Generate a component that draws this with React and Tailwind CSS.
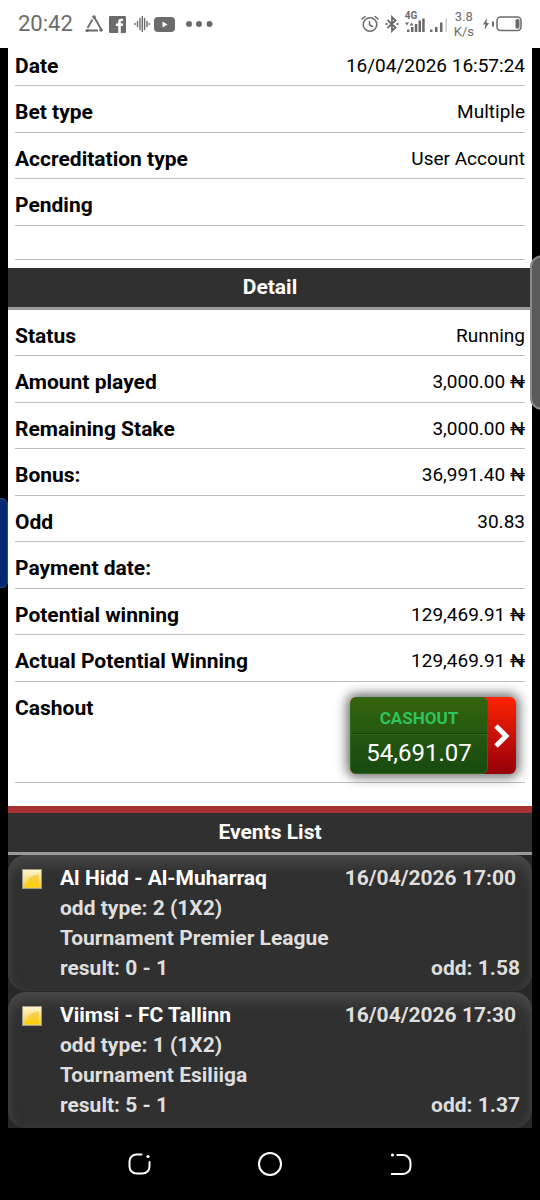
const summary = [
    { label: 'Date', value: '16/04/2026 16:57:24' },
    { label: 'Bet type', value: 'Multiple' },
    { label: 'Accreditation type', value: 'User Account' },
    { label: 'Pending', value: '' },
];

const details = [
    { label: 'Status', value: 'Running' },
    { label: 'Amount played', value: '3,000.00 ₦' },
    { label: 'Remaining Stake', value: '3,000.00 ₦' },
    { label: 'Bonus:', value: '36,991.40 ₦' },
    { label: 'Odd', value: '30.83' },
    { label: 'Payment date:', value: '' },
    { label: 'Potential winning', value: '129,469.91 ₦' },
    { label: 'Actual Potential Winning', value: '129,469.91 ₦' },
];

const events = [
    {
        teams: 'Al Hidd - Al-Muharraq',
        time: '16/04/2026 17:00',
        type: '2 (1X2)',
        tournament: 'Premier League',
        result: '0 - 1',
        odd: '1.58',
    },
    {
        teams: 'Viimsi - FC Tallinn',
        time: '16/04/2026 17:30',
        type: '1 (1X2)',
        tournament: 'Esiliiga',
        result: '5 - 1',
        odd: '1.37',
    },
];

function StatusBar() {
    return (
        <header className="flex h-12 shrink-0 items-center justify-between bg-white px-[18px] text-[#6b6b6b]">
            <div className="flex items-center">
                <span className="text-[22px] leading-6">20:42</span>
                {/* Triangle app */}
                <svg className="ml-3 h-[18px] w-[18px]" viewBox="0 0 18 18" fill="none" stroke="currentColor" strokeWidth="1.8">
                    <path d="M9.5 2.5L16 14M2 15.5h11M2.5 13L7.5 4.5" />
                    <g fill="currentColor" stroke="none">
                        <circle cx="9" cy="2" r="1.8" />
                        <circle cx="16" cy="15" r="1.8" />
                        <circle cx="2" cy="15.5" r="1.6" />
                    </g>
                </svg>
                <svg className="ml-1.5 h-[17px] w-[17px]" viewBox="0 0 17 17">
                    <rect width="17" height="17" rx="1" fill="currentColor" />
                    <path d="M14 2.7h-1.8c-1.9 0-3 1.1-3 3v1.8H6.8V10h2.4v7h2.6v-7h2l.4-2.5h-2.4V6.2c0-.7.3-1.1 1.1-1.1H14z" fill="white" />
                </svg>
                {/* Voice wave */}
                <svg className="ml-2 h-[18px] w-4" viewBox="0 0 16 18" stroke="currentColor" strokeWidth="1.4" strokeLinecap="round">
                    <path d="M1 8.5v1M3.5 6.5v5M6 3.5v11M8.3 1.5v15M10.6 3.5v11M13 6.5v5M15.2 8.5v1" />
                </svg>
                <svg className="ml-1 h-[15px] w-[21px]" viewBox="0 0 21 15">
                    <rect width="21" height="15" rx="4" fill="currentColor" />
                    <path d="M8.5 4.5v6l5-3z" fill="white" />
                </svg>
                <svg className="ml-2.5 h-2 w-7" viewBox="0 0 28 8" fill="currentColor">
                    <circle cx="4" cy="4" r="3" />
                    <circle cx="14" cy="4" r="3" />
                    <circle cx="24.5" cy="4" r="3" />
                </svg>
            </div>

            <div className="flex items-center">
                {/* Alarm */}
                <svg className="h-[18px] w-[18px]" viewBox="0 0 18 18" fill="none" stroke="currentColor" strokeWidth="1.5" strokeLinecap="round">
                    <circle cx="9" cy="9.5" r="6.8" />
                    <path d="M1 4l3-2.5M17 4l-3-2.5M8.5 6.5v3.5l3 1.5" />
                </svg>
                {/* Bluetooth */}
                <svg className="ml-1.5 h-[18px] w-3.5" viewBox="0 0 14 18" fill="none" stroke="currentColor" strokeWidth="1.8">
                    <path d="M2.5 5l8 7.5L7 16V2l3.5 3.5-8 7.5" />
                    <path d="M.5 9h2M11.5 9h2" />
                </svg>
                {/* 4G signal */}
                <span className="relative ml-1.5 flex">
                    <svg className="h-5 w-5" viewBox="0 0 20 20" fill="currentColor">
                        <path d="M2 15.5h2.5V18H2zM6 13h2.5v5H6zM9.8 10h2.5v8H9.8zM13.5 6.5H16V18h-2.5zM17.2 4.5h2.5V18h-2.5z" />
                        <path d="M0 8.5h4L2 11.5zM4.5 11.5h4l-2-3z" />
                    </svg>
                    <span className="absolute -top-1 left-0 text-[10px] leading-3 font-bold">4G</span>
                </span>
                <svg className="ml-1 h-5 w-[19px]" viewBox="0 0 19 20" fill="currentColor">
                    <path d="M1 15.5h2.5V18H1zM6 13h2.5v5H6zM11 8.5h2.5V18H11z" />
                    <path d="M16.5 4.5H18V18h-1.5z" opacity="0.35" />
                </svg>
                <span className="ml-1.5 flex flex-col items-center text-[13px] leading-[15px]">
                    <span>3.8</span>
                    <span>K/s</span>
                </span>
                {/* Charging battery */}
                <svg className="ml-2 h-[18px] w-10" viewBox="0 0 40 18" fill="none" stroke="currentColor" strokeWidth="1.5">
                    <path d="M5 3L1 9.5h2.5L2.5 15 7 8H4.5z" fill="currentColor" stroke="none" />
                    <path d="M11 6.5v5" strokeWidth="2" />
                    <rect x="15" y="2" width="24" height="13.5" rx="3.5" />
                    <rect x="33.5" y="4" width="4" height="9.5" rx="1.5" fill="currentColor" stroke="none" />
                </svg>
            </div>
        </header>
    );
}

function InfoRow({ label, value }) {
    return (
        <div className="flex justify-between border-b border-[#bdbdbd] pt-[15px] text-black odd:pb-2 even:pb-[9px]">
            <dt className="text-[21px] leading-[22px] font-bold">{label}</dt>
            <dd className="text-[19px] leading-[22px]">{value}</dd>
        </div>
    );
}

function SectionTitle({ children }) {
    return (
        <h2 className="border-b-[3px] border-[#9a9a9a] bg-[#303030] py-2 text-center text-[21px] leading-[23px] font-bold text-white">
            {children}
        </h2>
    );
}

function CashoutButton({ amount }) {
    return (
        <button className="mr-[9px] flex h-[77px] w-[166px] overflow-hidden rounded-md bg-linear-to-b from-[#ff2200] to-[#96000a] shadow-[0_0_12px_3px_#666]">
            <span className="flex flex-1 flex-col rounded-md border border-[#2f6b16] bg-linear-to-b from-[#33650f] to-[#164a10]">
                <span className="flex h-9 items-center justify-center border-b border-[#12400c] pt-1.5 text-[17px] font-bold text-[#2ec45e]">
                    CASHOUT
                </span>
                <span className="flex flex-1 items-start justify-center border-t border-[#2f6b16] pt-1 text-[24px] leading-7 text-white">
                    {amount}
                </span>
            </span>
            <span className="flex w-7 items-center justify-center self-stretch">
                <svg className="h-6 w-4" viewBox="0 0 16 24" fill="none" stroke="white" strokeWidth="5">
                    <path d="M2 2l10 10L2 22" />
                </svg>
            </span>
        </button>
    );
}

function PendingIcon() {
    return (
        <svg className="mt-1.5 h-5 w-5 shrink-0" viewBox="0 0 20 20">
            <defs>
                <linearGradient id="pendingFill" x1="0" y1="0" x2="0" y2="1">
                    <stop offset="0" stopColor="#fff6cc" />
                    <stop offset="1" stopColor="#ecca48" />
                </linearGradient>
                <linearGradient id="pendingGlow" x1="0" y1="0" x2="0" y2="1">
                    <stop offset="0" stopColor="#f3cf66" />
                    <stop offset="1" stopColor="#ffd000" />
                </linearGradient>
            </defs>
            <rect x="0.5" y="0.5" width="19" height="19" fill="url(#pendingFill)" stroke="#a39a80" />
            <path d="M3.5 18C4 11 8 6 17 5.500V18z" fill="url(#pendingGlow)" />
        </svg>
    );
}

function EventCard({ event }) {
    return (
        <li className="flex rounded-[18px] bg-[#303030] pt-2 pr-3 pb-2 pl-3.5 text-[21px] leading-[30px] font-bold text-[#dedede] shadow-[inset_0_12px_16px_-4px_#4a4a4a,inset_0_0_8px_#3c3c3c]">
            <PendingIcon />
            <div className="ml-[18px] flex-1">
                <div className="flex justify-between pr-1">
                    <h3 className="text-white">{event.teams}</h3>
                    <time>{event.time}</time>
                </div>
                <p>odd type: {event.type}</p>
                <p>Tournament {event.tournament}</p>
                <div className="flex justify-between">
                    <p>result: {event.result}</p>
                    <p>odd: {event.odd}</p>
                </div>
            </div>
        </li>
    );
}

function NavBar() {
    return (
        <nav className="flex h-[72px] shrink-0 items-center justify-center gap-[106px] bg-black text-white">
            <button aria-label="Recent apps">
                <svg className="h-6 w-6" viewBox="0 0 24 24" fill="none" stroke="currentColor" strokeWidth="2" strokeLinecap="round">
                    <path d="M14.5 2.500H9.500a7 7 0 0 0-7 7v5a7 7 0 0 0 7 7h6a7 7 0 0 0 7-7V10" />
                    <circle cx="21" cy="4.500" r="1.600" fill="currentColor" stroke="none" />
                </svg>
            </button>
            <button aria-label="Home">
                <svg className="h-[26px] w-[26px]" viewBox="0 0 26 26" fill="none" stroke="currentColor" strokeWidth="2">
                    <circle cx="13" cy="13" r="11" />
                </svg>
            </button>
            <button aria-label="Back">
                <svg className="h-6 w-6" viewBox="0 0 24 24" fill="none" stroke="currentColor" strokeWidth="2">
                    <path d="M7.5 3H14a7.500 7.500 0 0 1 7.500 7.500v4A7.500 7.500 0 0 1 14 22H2" />
                    <circle cx="3.500" cy="3" r="1.600" fill="currentColor" stroke="none" />
                </svg>
            </button>
        </nav>
    );
}

export default function App() {
    return (
        <div className="relative flex min-h-screen flex-col overflow-hidden bg-black font-[Roboto,sans-serif]">
            <StatusBar />

            <main className="mx-2 flex-1 bg-white">
                <div className="overflow-hidden">
                    <dl className="-mt-2 px-[7px]">
                        {summary.map(row => (
                            <InfoRow key={row.label} {...row} />
                        ))}
                    </dl>
                    <div className="mx-[7px] mb-2 h-[34px] border-b border-[#bdbdbd]" />
                </div>

                <SectionTitle>Detail</SectionTitle>
                <dl className="px-[7px]">
                    {details.map(row => (
                        <InfoRow key={row.label} {...row} />
                    ))}
                    <div className="flex justify-between border-b border-[#bdbdbd] pt-[15px] pb-2 text-black">
                        <dt className="text-[21px] leading-[22px] font-bold">Cashout</dt>
                        <dd>
                            <CashoutButton amount="54,691.07" />
                        </dd>
                    </div>
                </dl>

                <section className="mt-[23px] border-t-[7px] border-[#a83232] bg-[#282828]">
                    <SectionTitle>Events List</SectionTitle>
                    <ul className="flex flex-col gap-px">
                        {events.map(event => (
                            <EventCard key={event.teams} event={event} />
                        ))}
                    </ul>
                </section>
            </main>

            <NavBar />

            {/* Edge panel handles */}
            <div className="absolute top-[255px] -right-2 h-[155px] w-[18px] rounded-l-xl border-2 border-[#8a8a8a] bg-[#5a5a59]" />
            <div className="absolute top-[498px] -left-2 h-[90px] w-4 rounded-r-md border border-[#2a4c8e] bg-[#04296f]" />
        </div>
    );
}
